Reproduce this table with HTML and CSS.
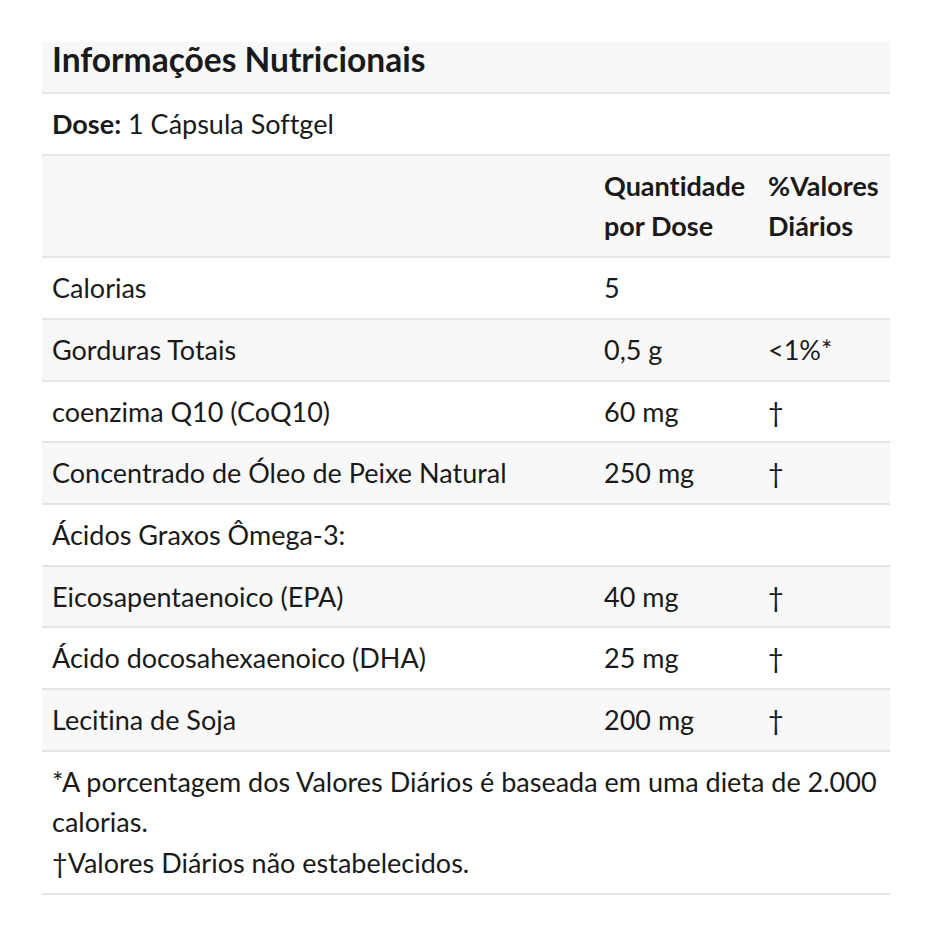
FILE: index.html
```html
<!DOCTYPE html>
<html lang="pt-BR">
<head>
<meta charset="utf-8">
<title>Informações Nutricionais</title>
<link rel="stylesheet" href="styles.css">
</head>
<body>
<div class="page">
  <table class="facts">
    <colgroup>
      <col class="c-name">
      <col class="c-qty">
      <col class="c-dv">
    </colgroup>
    <thead>
      <tr class="title-row"><th colspan="3" class="title">Informações Nutricionais</th></tr>
      <tr class="dose-row"><td colspan="3"><strong>Dose:</strong> 1 Cápsula Softgel</td></tr>
      <tr class="shade head-row">
        <th></th>
        <th>Quantidade por Dose</th>
        <th>%Valores Diários</th>
      </tr>
    </thead>
    <tbody>
      <tr><td>Calorias</td><td>5</td><td></td></tr>
      <tr class="shade"><td>Gorduras Totais</td><td>0,5 g</td><td>&lt;1%*</td></tr>
      <tr><td>coenzima Q10 (CoQ10)</td><td>60 mg</td><td>†</td></tr>
      <tr class="shade"><td>Concentrado de Óleo de Peixe Natural</td><td>250 mg</td><td>†</td></tr>
      <tr><td>Ácidos Graxos Ômega-3:</td><td></td><td></td></tr>
      <tr class="shade"><td>Eicosapentaenoico (EPA)</td><td>40 mg</td><td>†</td></tr>
      <tr><td>Ácido docosahexaenoico (DHA)</td><td>25 mg</td><td>†</td></tr>
      <tr class="shade"><td>Lecitina de Soja</td><td>200 mg</td><td>†</td></tr>
    </tbody>
    <tfoot>
      <tr><td colspan="3" class="notes">*A porcentagem dos Valores Diários é baseada em uma dieta de 2.000 calorias.<br>†Valores Diários não estabelecidos.</td></tr>
    </tfoot>
  </table>
</div>
</body>
</html>
```

FILE: styles.css
```css
html, body {
  margin: 0;
  padding: 0;
  background: #ffffff;
}

.page {
  padding: 42px 42px 0 42px;
  font-family: Lato, "Liberation Sans", sans-serif;
  font-variant-ligatures: none;
  color: #1a1a1a;
}

.facts {
  width: 848px;
  border-collapse: collapse;
  table-layout: fixed;
  font-size: 27px;
  line-height: 40.7px;
}

.c-name { width: 552px; }
.c-qty { width: 164px; }
.c-dv { width: 132px; }

.facts td,
.facts th {
  padding: 10px 10px 9px 10px;
  text-align: left;
  vertical-align: top;
  border-bottom: 2px solid #e4e4e4;
  font-weight: 400;
}

.facts .head-row th {
  font-weight: 700;
}

.facts .title {
  background: #f8f8f8;
  font-size: 33.5px;
  font-weight: 700;
  line-height: 34px;
  padding: 0 10px 16px 10px;
}

.dose-row strong {
  font-weight: 700;
}

.shade td,
.shade th {
  background: #f8f8f8;
}

.notes {
  white-space: normal;
}
```
